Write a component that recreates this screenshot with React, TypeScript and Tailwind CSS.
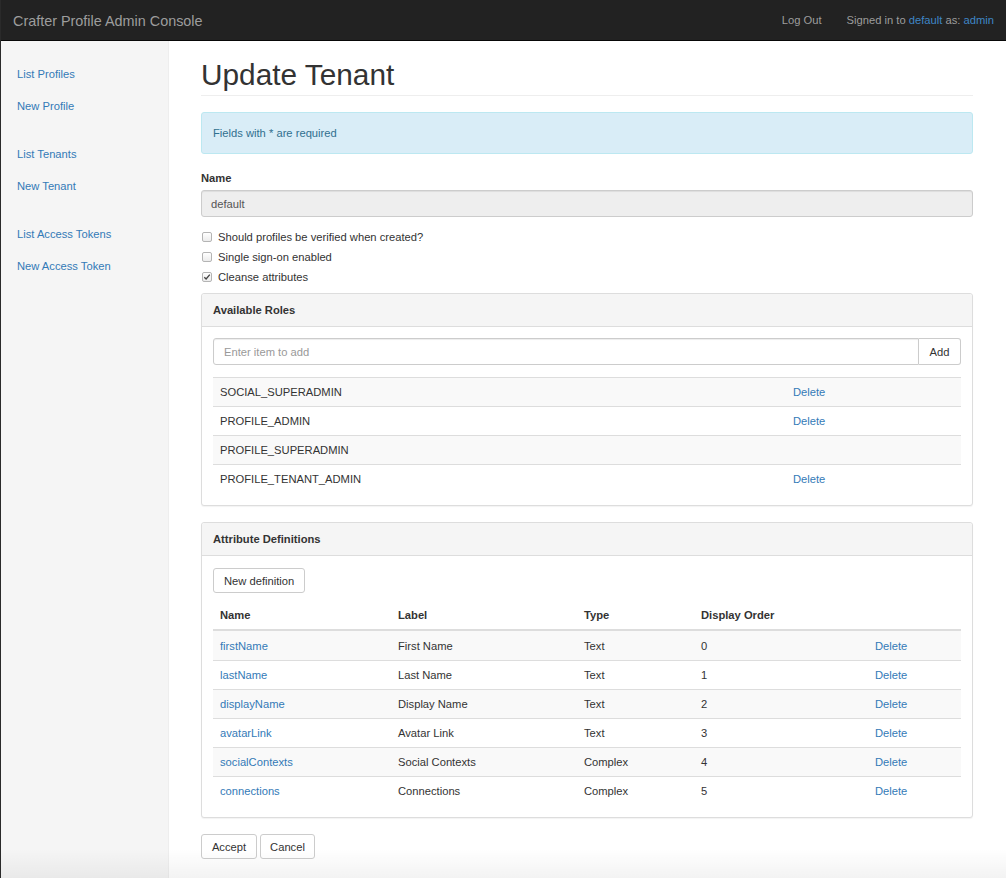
import React from 'react';

const roles = [
  { name: 'SOCIAL_SUPERADMIN', removable: true },
  { name: 'PROFILE_ADMIN', removable: true },
  { name: 'PROFILE_SUPERADMIN', removable: false },
  { name: 'PROFILE_TENANT_ADMIN', removable: true },
];

const attributes = [
  { name: 'firstName', label: 'First Name', type: 'Text', order: 0 },
  { name: 'lastName', label: 'Last Name', type: 'Text', order: 1 },
  { name: 'displayName', label: 'Display Name', type: 'Text', order: 2 },
  { name: 'avatarLink', label: 'Avatar Link', type: 'Text', order: 3 },
  { name: 'socialContexts', label: 'Social Contexts', type: 'Complex', order: 4 },
  { name: 'connections', label: 'Connections', type: 'Complex', order: 5 },
];

const sideGroups = [
  ['List Profiles', 'New Profile'],
  ['List Tenants', 'New Tenant'],
  ['List Access Tokens', 'New Access Token'],
];

function Checkbox({ checked, label }: { checked?: boolean; label: string }) {
  return (
    <label className="flex items-center h-[16px] gap-[6px]">
      <span className="ml-px w-[10px] h-[10px] rounded-[2px] border border-[#b4b4b4] bg-gradient-to-b from-white to-[#ececec] flex items-center justify-center">
        {checked && (
          <svg width="8" height="8" viewBox="0 0 8 8">
            <path d="M1.3 4.2 L3.1 6 L6.8 1.6" fill="none" stroke="#444" strokeWidth="1.3" />
          </svg>
        )}
      </span>
      <span>{label}</span>
    </label>
  );
}

function Panel({ title, children }: { title: string; children: React.ReactNode }) {
  return (
    <div className="border border-[#ddd] rounded-[3px] shadow-[0_1px_1px_rgba(0,0,0,0.05)] bg-white">
      <div className="h-[33px] px-[11px] flex items-center bg-[#f5f5f5] border-b border-[#ddd] rounded-t-[3px] font-bold">
        {title}
      </div>
      <div className="px-[11px] pt-[11px] pb-[12px]">{children}</div>
    </div>
  );
}

export default function App() {
  return (
    <div className="relative min-h-screen flex flex-col bg-white text-[#333] text-[11.2px] leading-[16px] font-['Liberation_Sans',Arial,sans-serif] border-l border-[#2a2a2a] overflow-hidden">
      {/* Navbar */}
      <div className="h-[41px] shrink-0 bg-[#222] border-b border-[#080808] flex items-center justify-between pl-[12px] pr-[12px]">
        <span className="text-[14.4px] text-[#9d9d9d] mt-px">Crafter Profile Admin Console</span>
        <div className="flex items-center gap-[25px] text-[#9d9d9d]">
          <span>Log Out</span>
          <span>
            Signed in to <span className="text-[#3f86c6]">default</span> as: <span className="text-[#3f86c6]">admin</span>
          </span>
        </div>
      </div>

      <div className="flex flex-1">
        {/* Sidebar */}
        <div className="w-[168px] shrink-0 bg-[#f5f5f5] border-r border-[#eee] pt-[17px]">
          {sideGroups.map((group, i) => (
            <div key={i} className="mb-[16px]">
              {group.map((item) => (
                <div key={item} className="h-[32px] flex items-center pl-[16px] text-[#337ab7]">
                  {item}
                </div>
              ))}
            </div>
          ))}
        </div>

        {/* Main */}
        <div className="flex-1 pl-[32px] pr-[33px]">
          <div className="mt-[18px] pb-[4px] border-b border-[#eee]">
            <h1 className="text-[29.8px] leading-[32px] text-[#333]">Update Tenant</h1>
          </div>

          <div className="mt-[16px] h-[42px] px-[11px] flex items-center bg-[#d9edf7] border border-[#bce8f1] rounded-[3px] text-[#31708f]">
            Fields with * are required
          </div>

          <div className="mt-[16px] font-bold">Name</div>
          <div className="mt-[4px] h-[27px] px-[9px] flex items-center bg-[#eee] border border-[#ccc] rounded-[3px] text-[#555] shadow-[inset_0_1px_1px_rgba(0,0,0,0.075)]">
            default
          </div>

          <div className="mt-[12px] flex flex-col gap-[4px]">
            <Checkbox label="Should profiles be verified when created?" />
            <Checkbox label="Single sign-on enabled" />
            <Checkbox checked label="Cleanse attributes" />
          </div>

          <div className="mt-[8px]">
            <Panel title="Available Roles">
              <div className="flex h-[27px]">
                <div className="flex-1 border border-[#ccc] rounded-l-[3px] px-[10px] flex items-center text-[#999] shadow-[inset_0_1px_1px_rgba(0,0,0,0.075)]">
                  Enter item to add
                </div>
                <div className="w-[42px] border border-l-0 border-[#ccc] rounded-r-[3px] flex items-center justify-center">Add</div>
              </div>
              <div className="mt-[12px]">
                {roles.map((r, i) => (
                  <div
                    key={r.name}
                    className={`h-[29px] border-t border-[#ddd] grid grid-cols-[573px_1fr] items-center ${i % 2 === 0 ? 'bg-[#f9f9f9]' : 'bg-white'}`}
                  >
                    <span className="pl-[7px]">{r.name}</span>
                    <span className="pl-[7px] text-[#337ab7]">{r.removable ? 'Delete' : ''}</span>
                  </div>
                ))}
              </div>
            </Panel>
          </div>

          <div className="mt-[16px]">
            <Panel title="Attribute Definitions">
              <div className="mt-px inline-flex h-[25px] px-[10px] items-center border border-[#ccc] rounded-[3px]">New definition</div>
              <div className="mt-[8px]">
                <div className="h-[30px] border-b-2 border-[#ddd] grid grid-cols-[178px_186px_117px_174px_1fr] items-center font-bold">
                  <span className="pl-[7px]">Name</span>
                  <span className="pl-[7px]">Label</span>
                  <span className="pl-[7px]">Type</span>
                  <span className="pl-[7px]">Display Order</span>
                  <span />
                </div>
                {attributes.map((a, i) => (
                  <div
                    key={a.name}
                    className={`h-[29px] grid grid-cols-[178px_186px_117px_174px_1fr] items-center ${i > 0 ? 'border-t border-[#ddd]' : ''} ${i % 2 === 0 ? 'bg-[#f9f9f9]' : 'bg-white'}`}
                  >
                    <span className="pl-[7px] text-[#337ab7]">{a.name}</span>
                    <span className="pl-[7px]">{a.label}</span>
                    <span className="pl-[7px]">{a.type}</span>
                    <span className="pl-[7px]">{a.order}</span>
                    <span className="pl-[7px] text-[#337ab7]">Delete</span>
                  </div>
                ))}
              </div>
            </Panel>
          </div>

          <div className="mt-[16px] flex gap-[3px] pb-[20px]">
            <div className="h-[25px] w-[56px] border border-[#ccc] rounded-[3px] flex items-center justify-center">Accept</div>
            <div className="h-[25px] w-[55px] border border-[#ccc] rounded-[3px] flex items-center justify-center">Cancel</div>
          </div>
        </div>
      </div>

      {/* window shade at the bottom edge */}
      <div className="pointer-events-none absolute left-0 right-0 bottom-0 h-[30px] bg-gradient-to-b from-transparent to-black/[0.05]" />
    </div>
  );
}
